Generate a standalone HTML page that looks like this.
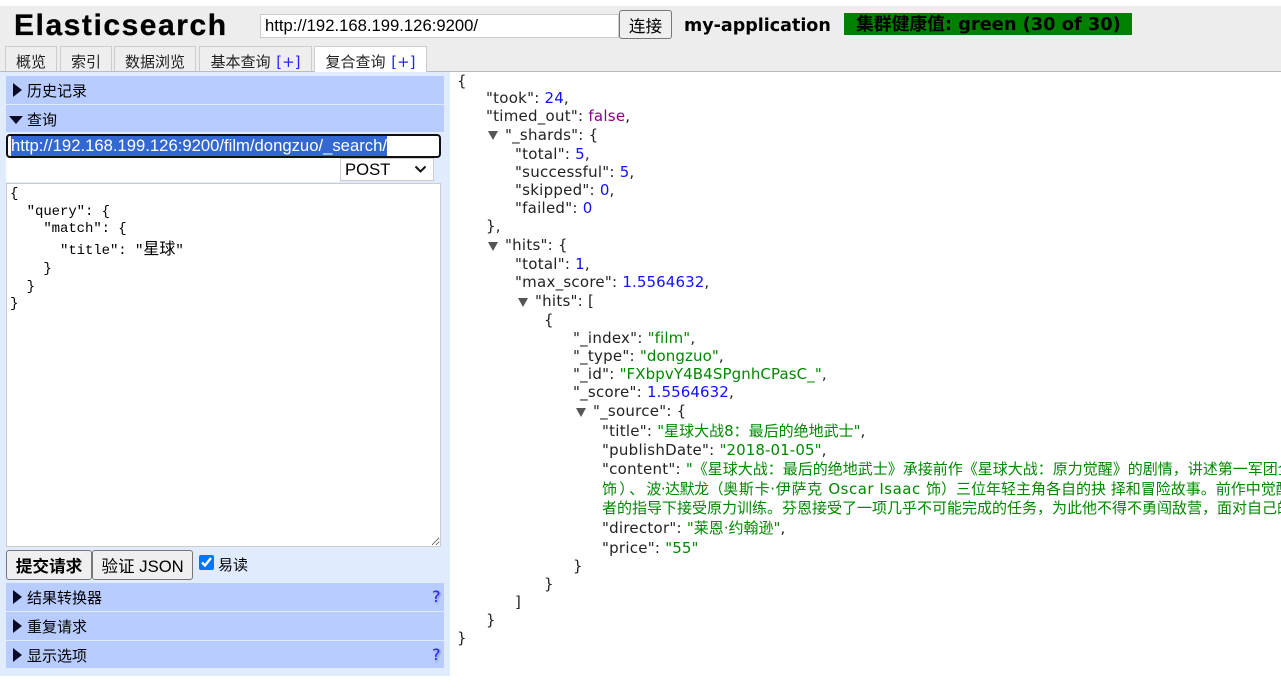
<!DOCTYPE html>
<html><head><meta charset="utf-8"><style>
html,body{margin:0;padding:0;width:1281px;height:692px;overflow:hidden;background:#fff;font-family:"Liberation Sans","Noto Sans CJK SC",sans-serif;color:#000}
.a{position:absolute;white-space:nowrap}
.tab{position:absolute;top:46px;height:25px;box-sizing:border-box;border:1px solid #ccc;border-bottom:none;background:#eee;font-family:"DejaVu Sans","Noto Sans CJK SC",sans-serif;font-size:15px;line-height:31px;text-align:center;color:#222;overflow:hidden;white-space:nowrap}
.tab b{font-weight:normal;color:#22f;margin-left:1px}
.sec{position:absolute;left:6px;width:438px;background:#b8ccff;font-family:"DejaVu Sans","Noto Sans CJK SC",sans-serif;font-size:15px;line-height:28px;height:28px}
.sec span{position:absolute;left:21px;top:1px}
.tr{position:absolute;left:7px;top:7px;width:0;height:0;border-left:9px solid #0a0a28;border-top:7px solid transparent;border-bottom:7px solid transparent}
.td{position:absolute;left:3px;top:11px;width:0;height:0;border-top:8px solid #0a0a28;border-left:7.5px solid transparent;border-right:7.5px solid transparent}
.sec .q{position:absolute;left:426px;top:0;color:#22f;font-size:16px;text-shadow:1px 1px 2px #778}
#j{position:absolute;left:0;top:1px;width:1281px;height:691px;overflow:hidden;font-family:"DejaVu Sans","Noto Sans CJK SC",sans-serif;font-size:15px;color:#222;letter-spacing:.25px}
#j div{position:absolute;white-space:nowrap;line-height:18px}
.n{color:#11f;letter-spacing:.1px}.s{color:#080;letter-spacing:.1px}.b{color:#808}
#j .z{letter-spacing:0}
.t{position:absolute;width:0;height:0;border-top:9px solid #555;border-left:5px solid transparent;border-right:5px solid transparent}
button{font-family:inherit;position:absolute;box-sizing:border-box;border:1px solid #767676;border-radius:3px;background:#efefef;padding:0;color:#000}
</style></head><body>
<div class="a" style="left:0;top:6px;width:1281px;height:65px;background:#ededed;border-bottom:1px solid #bbb"></div>
<div class="a" style="left:14px;top:7px;font-size:30px;line-height:38px;font-weight:bold;letter-spacing:1.55px;-webkit-text-stroke:.3px #000">Elasticsearch</div>
<div class="a" style="left:260px;top:14px;width:359px;height:24px;box-sizing:border-box;background:#fff;border:1px solid #ccc;font-size:16.67px;line-height:22px;padding-left:4px">http://192.168.199.126:9200/</div>
<button style="left:619px;top:10px;width:53px;height:29px;font-size:16.67px">连接</button>
<div class="a" style="left:684px;top:13px;font-family:'DejaVu Sans','Noto Sans CJK SC',sans-serif;font-size:17.5px;line-height:26px;font-weight:bold">my-application</div>
<div class="a" style="left:844px;top:13px;width:288px;height:22px;background:#008000;font-family:'DejaVu Sans','Noto Sans CJK SC',sans-serif;font-size:17.8px;line-height:24px;font-weight:bold;padding-left:12px;box-sizing:border-box;overflow:hidden">集群健康值: green (30 of 30)</div>
<div class="tab" style="left:5px;width:52px">概览</div>
<div class="tab" style="left:60px;width:52px">索引</div>
<div class="tab" style="left:114px;width:82px">数据浏览</div>
<div class="tab" style="left:199px;width:113px">基本查询 <b>[+]</b></div>
<div class="tab" style="left:314px;width:113px;height:27px;background:#fff">复合查询 <b>[+]</b></div>

<div class="a" style="left:0;top:72px;width:450px;height:604px;background:#e1ebfe"></div>
<div class="sec" style="top:76px"><i class="tr"></i><span>历史记录</span></div>
<div class="sec" style="top:105px;height:27px"><i class="td"></i><span>查询</span></div>
<div class="a" style="left:6px;top:134px;width:435px;height:24px;box-sizing:border-box;background:#fff;border:2px solid #101010;border-radius:4px;font-size:16.67px;line-height:20px;padding-left:3px;overflow:hidden"><span style="display:inline-block;height:20px;background:#3367d1;color:#fff">http://192.168.199.126:9200/film/dongzuo/_search/</span></div>
<div class="a" style="left:6px;top:158px;width:334px;height:24px;background:#fff"></div>
<select style="position:absolute;left:340px;top:158px;width:94px;height:23px;box-sizing:border-box;font-family:inherit;font-size:16.67px;border:1px solid #ccc;border-radius:0;background:#fff;padding:0 0 0 4px;appearance:none;-webkit-appearance:none;color:#000"><option>POST</option></select>
<svg style="position:absolute;left:414px;top:165px" width="13" height="9" viewBox="0 0 13 9"><path d="M1.5 1.5 L6.5 6.5 L11.5 1.5" fill="none" stroke="#111" stroke-width="2"/></svg>
<textarea spellcheck="false" style="position:absolute;left:6px;top:183px;width:435px;height:364px;box-sizing:border-box;margin:0;border:1px solid #ccc;padding:0;background:#fff;outline:none"></textarea>
<pre style="position:absolute;left:10px;top:186px;margin:0;white-space:pre;font-family:'Liberation Mono',monospace;font-size:14px;letter-spacing:-.07px;line-height:17.7px;color:#000">{
  "query": {
    "match": {
      "title": "<span style="font-family:'Noto Sans CJK SC',sans-serif;font-size:16px;line-height:16px;letter-spacing:0">星球</span>"
    }
  }
}</pre>
<button style="left:6px;top:550px;width:86px;height:30px;font-size:16.67px;font-weight:bold">提交请求</button>
<button style="left:92px;top:550px;width:101px;height:30px;font-size:16.67px">验证 JSON</button>
<input type="checkbox" checked style="position:absolute;left:199px;top:555px;width:15px;height:15px;margin:0">
<div class="a" style="left:218px;top:557px;font-size:15px;line-height:18px">易读</div>
<div class="sec" style="top:583px"><i class="tr"></i><span>结果转换器</span><span class="q">?</span></div>
<div class="sec" style="top:612px"><i class="tr"></i><span>重复请求</span></div>
<div class="sec" style="top:641px;height:27px"><i class="tr"></i><span>显示选项</span><span class="q">?</span></div>

<div id="j">
<div style="left:457px;top:71px">{</div>
<div style="left:486px;top:88px">"took": <span class="n">24</span>,</div>
<div style="left:486px;top:106px">"timed_out": <span class="b">false</span>,</div>
<i class="t" style="left:488px;top:130px"></i>
<div style="left:505px;top:125px">"_shards": {</div>
<div style="left:515px;top:144px">"total": <span class="n">5</span>,</div>
<div style="left:515px;top:162px">"successful": <span class="n">5</span>,</div>
<div style="left:515px;top:180px">"skipped": <span class="n">0</span>,</div>
<div style="left:515px;top:198px">"failed": <span class="n">0</span></div>
<div style="left:486px;top:216px">},</div>
<i class="t" style="left:488px;top:241px"></i>
<div style="left:505px;top:235px">"hits": {</div>
<div style="left:515px;top:254px">"total": <span class="n">1</span>,</div>
<div style="left:515px;top:272px">"max_score": <span class="n">1.5564632</span>,</div>
<i class="t" style="left:518px;top:297px"></i>
<div style="left:535px;top:291px">"hits": [</div>
<div style="left:544px;top:310px">{</div>
<div style="left:573px;top:328px">"_index": <span class="s">"film"</span>,</div>
<div style="left:573px;top:346px">"_type": <span class="s">"dongzuo"</span>,</div>
<div style="left:573px;top:364px">"_id": <span class="s">"FXbpvY4B4SPgnhCPasC_"</span>,</div>
<div style="left:573px;top:382px">"_score": <span class="n">1.5564632</span>,</div>
<i class="t" style="left:576px;top:407px"></i>
<div style="left:593px;top:401px">"_source": {</div>
<div style="left:602px;top:421px">"title": <span class="s z">"星球大战8：最后的绝地武士"</span>,</div>
<div style="left:602px;top:440px">"publishDate": <span class="s">"2018-01-05"</span>,</div>
<div style="left:602px;top:459px">"content": <span class="s z">"《星球大战：最后的绝地武士》承接前作《星球大战：原力觉醒》的剧情，讲述第一军团全面</span></div>
<div class="s z" style="left:602px;top:479px"><span style="letter-spacing:2.3px">饰）、</span><span style="letter-spacing:-.5px">波·达默龙（</span><span style="letter-spacing:.7px">奥斯卡·伊萨克 </span><span style="letter-spacing:.5px">Oscar Isaac </span>饰）三位年轻主角各自的抉 择和冒险故事。前作中觉醒强大</div>
<div class="s z" style="left:602px;top:498px">者的指导下接受原力训练。芬恩接受了一项几乎不可能完成的任务，为此他不得不勇闯敌营，面对自己的</div>
<div style="left:602px;top:518px">"director": <span class="s z">"莱恩·约翰逊"</span>,</div>
<div style="left:602px;top:538px">"price": <span class="s">"55"</span></div>
<div style="left:573px;top:556px">}</div>
<div style="left:544px;top:574px">}</div>
<div style="left:515px;top:592px">]</div>
<div style="left:486px;top:610px">}</div>
<div style="left:457px;top:628px">}</div>
</div>
</body></html>
